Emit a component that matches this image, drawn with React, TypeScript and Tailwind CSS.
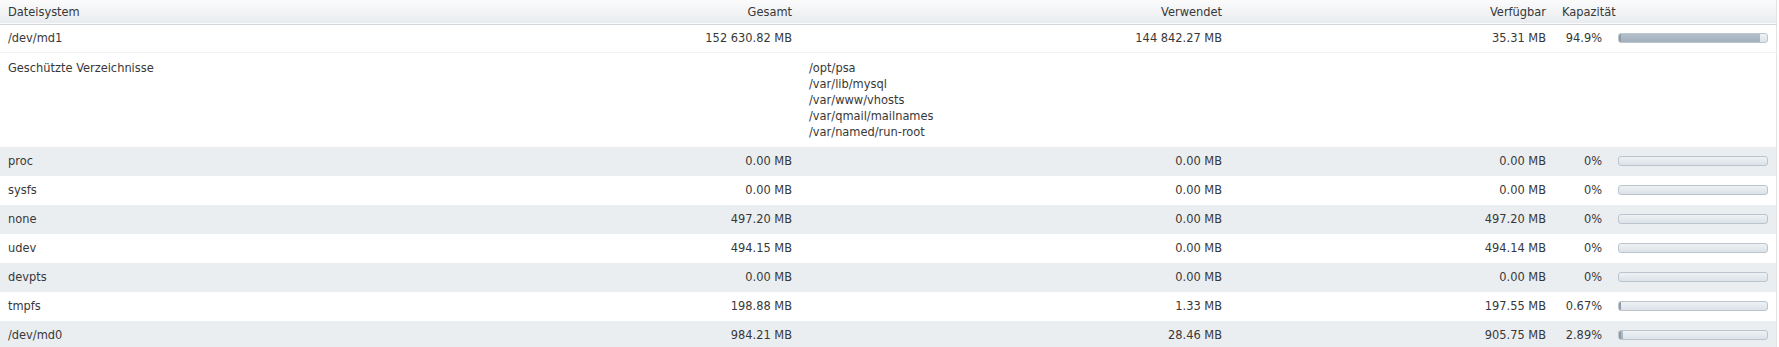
const rows = [
  { name: "proc", total: "0.00 MB", used: "0.00 MB", free: "0.00 MB", pct: "0%", value: 0 },
  { name: "sysfs", total: "0.00 MB", used: "0.00 MB", free: "0.00 MB", pct: "0%", value: 0 },
  { name: "none", total: "497.20 MB", used: "0.00 MB", free: "497.20 MB", pct: "0%", value: 0 },
  { name: "udev", total: "494.15 MB", used: "0.00 MB", free: "494.14 MB", pct: "0%", value: 0 },
  { name: "devpts", total: "0.00 MB", used: "0.00 MB", free: "0.00 MB", pct: "0%", value: 0 },
  { name: "tmpfs", total: "198.88 MB", used: "1.33 MB", free: "197.55 MB", pct: "0.67%", value: 0.67 },
  { name: "/dev/md0", total: "984.21 MB", used: "28.46 MB", free: "905.75 MB", pct: "2.89%", value: 2.89 },
];

const protectedDirs = [
  "/opt/psa",
  "/var/lib/mysql",
  "/var/www/vhosts",
  "/var/qmail/mailnames",
  "/var/named/run-root",
];

const Bar = ({ value }: { value: number }) => (
  <div className="h-[10px] w-[150px] rounded-[3px] border border-[#bcc5cd] bg-gradient-to-b from-[#eef2f5] to-[#dbe2e8] overflow-hidden">
    {value > 0 && (
      <div
        className="h-full bg-gradient-to-b from-[#b4c0cb] to-[#a3b0bc] border-l-2 border-[#8f9ba6]"
        style={{ width: `${Math.max(value, 1.5)}%` }}
      />
    )}
  </div>
);

export default function App() {
  return (
    <div className="w-[1779px] bg-white font-['DejaVu_Sans_Condensed','DejaVu_Sans',sans-serif] text-[12.7px] leading-4 text-[#383838]">
      <table className="w-[1776px] table-fixed border-collapse border-r border-[#e1e5e8]">
        <colgroup>
          <col className="w-[400px]" />
          <col className="w-[400px]" />
          <col className="w-[430px]" />
          <col className="w-[324px]" />
          <col className="w-[56px]" />
          <col className="w-[166px]" />
        </colgroup>
        <thead>
          <tr className="h-[24px] bg-gradient-to-b from-[#fbfbfc] to-[#e9ecef] border-b border-[#d3d8dc]">
            <th className="px-2 text-left font-normal">Dateisystem</th>
            <th className="px-2 text-right font-normal">Gesamt</th>
            <th className="px-2 text-right font-normal">Verwendet</th>
            <th className="px-2 text-right font-normal">Verfügbar</th>
            <th className="pl-2 text-left font-normal whitespace-nowrap" colSpan={2}>Kapazität</th>
          </tr>
        </thead>
        <tbody>
          <tr className="h-[28px] border-b border-[#f1f3f5]">
            <td className="px-2">/dev/md1</td>
            <td className="px-2 text-right">152 630.82 MB</td>
            <td className="px-2 text-right">144 842.27 MB</td>
            <td className="px-2 text-right">35.31 MB</td>
            <td className="pr-2 text-right whitespace-nowrap">94.9%</td>
            <td className="px-2">
              <Bar value={95.3} />
            </td>
          </tr>
          <tr>
            <td className="px-2 pt-[7px] pb-[7px] align-top" colSpan={2}>
              Geschützte Verzeichnisse
            </td>
            <td className="pl-[9px] pt-[7px] pb-[7px] align-top" colSpan={4}>
              {protectedDirs.map((d) => (
                <div key={d}>{d}</div>
              ))}
            </td>
          </tr>
          {rows.map((r, i) => (
            <tr key={r.name} className={`h-[29px] ${i % 2 === 0 ? "bg-[#ebeef1]" : "bg-white"}`}>
              <td className="px-2">{r.name}</td>
              <td className="px-2 text-right">{r.total}</td>
              <td className="px-2 text-right">{r.used}</td>
              <td className="px-2 text-right">{r.free}</td>
              <td className="pr-2 text-right whitespace-nowrap">{r.pct}</td>
              <td className="px-2">
                <Bar value={r.value} />
              </td>
            </tr>
          ))}
        </tbody>
      </table>
    </div>
  );
}
